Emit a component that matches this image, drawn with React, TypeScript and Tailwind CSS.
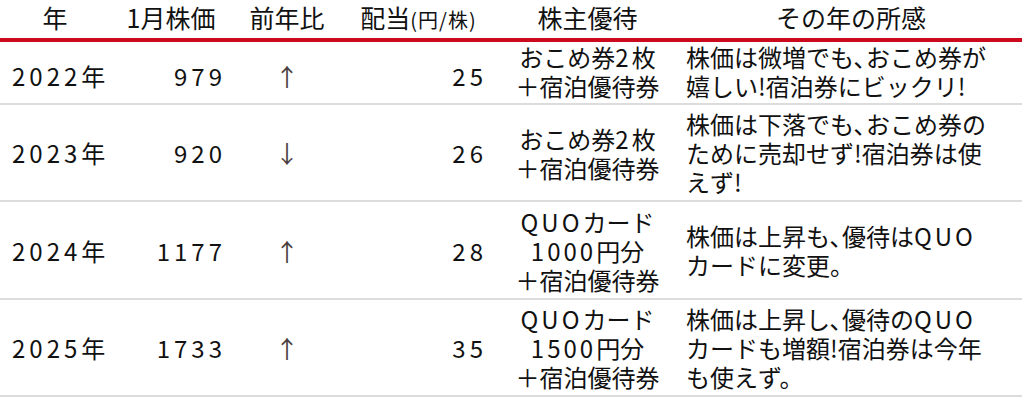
import type { ReactNode } from 'react'

const rows = [
  {
    year: '2022',
    price: '979',
    arrow: '↑',
    div: '25',
    perk: ['おこめ券2枚', '＋宿泊優待券'],
    note: ['株価は微増でも､おこめ券が', '嬉しい!宿泊券にビックリ!'],
    h: 'h-[63px]',
    lift: 'pb-[9px]',
  },
  {
    year: '2023',
    price: '920',
    arrow: '↓',
    div: '26',
    perk: ['おこめ券2枚', '＋宿泊優待券'],
    note: ['株価は下落でも､おこめ券の', 'ために売却せず!宿泊券は使', 'えず!'],
    h: 'h-[97px]',
    lift: '',
  },
  {
    year: '2024',
    price: '1177',
    arrow: '↑',
    div: '28',
    perk: ['QUOカード', '1000円分', '＋宿泊優待券'],
    note: ['株価は上昇も､優待はQUO', 'カードに変更。'],
    h: 'h-[98px]',
    lift: '',
  },
  {
    year: '2025',
    price: '1733',
    arrow: '↑',
    div: '35',
    perk: ['QUOカード', '1500円分', '＋宿泊優待券'],
    note: ['株価は上昇し､優待のQUO', 'カードも増額!宿泊券は今年', 'も使えず。'],
    h: 'h-[97px]',
    lift: '',
  },
]

const cols = 'grid grid-cols-[110px_122px_110px_153px_185px_342px]'

// latin letters and digits in the source font are wide, so space them out
function wide(text: string): ReactNode[] {
  return text.split(/([0-9A-Z]+)/).map((part, i) =>
    /^[0-9A-Z]+$/.test(part) ? (
      <span key={i} className="tracking-[3px]">
        {part}
      </span>
    ) : (
      part
    )
  )
}

export default function App() {
  return (
    <div className="w-[1024px] h-[414px] bg-white text-[#111] font-['Noto_Sans_CJK_JP','Noto_Sans',sans-serif] overflow-hidden">
      <div className="w-[1022px]">
        <div className={`${cols} h-[42px] border-b-4 border-[#cc0a1e] text-[25px] leading-none items-center`}>
          <div className="text-center pb-[3px]">年</div>
          <div className="text-center pb-[3px]">1月株価</div>
          <div className="text-center pb-[3px]">前年比</div>
          <div className="text-center pb-[3px]">
            配当<span className="text-[20px] tracking-[1px]">(円/株)</span>
          </div>
          <div className="text-center pb-[3px]">株主優待</div>
          <div className="text-center pb-[3px]">その年の所感</div>
        </div>

        {rows.map((r) => (
          <div
            key={r.year}
            className={`${cols} ${r.h} border-b-2 border-[#dcdcdc] text-[24px] leading-[29px] items-center`}
          >
            <div className="pl-[12px]">
              <span className="tracking-[4px]">{r.year}</span>年
            </div>
            <div className="text-right pr-[6px] tracking-[4px]">{r.price}</div>
            <div className="text-center text-[#4a4040]">{r.arrow}</div>
            <div className="text-right pr-[8px] tracking-[4px]">{r.div}</div>
            <div className={`text-center ${r.lift}`}>
              {r.perk.map((p) => (
                <div key={p}>{wide(p)}</div>
              ))}
            </div>
            <div className={`pl-[6px] whitespace-nowrap ${r.lift}`}>
              {r.note.map((n) => (
                <div key={n}>{wide(n)}</div>
              ))}
            </div>
          </div>
        ))}
      </div>
    </div>
  )
}
